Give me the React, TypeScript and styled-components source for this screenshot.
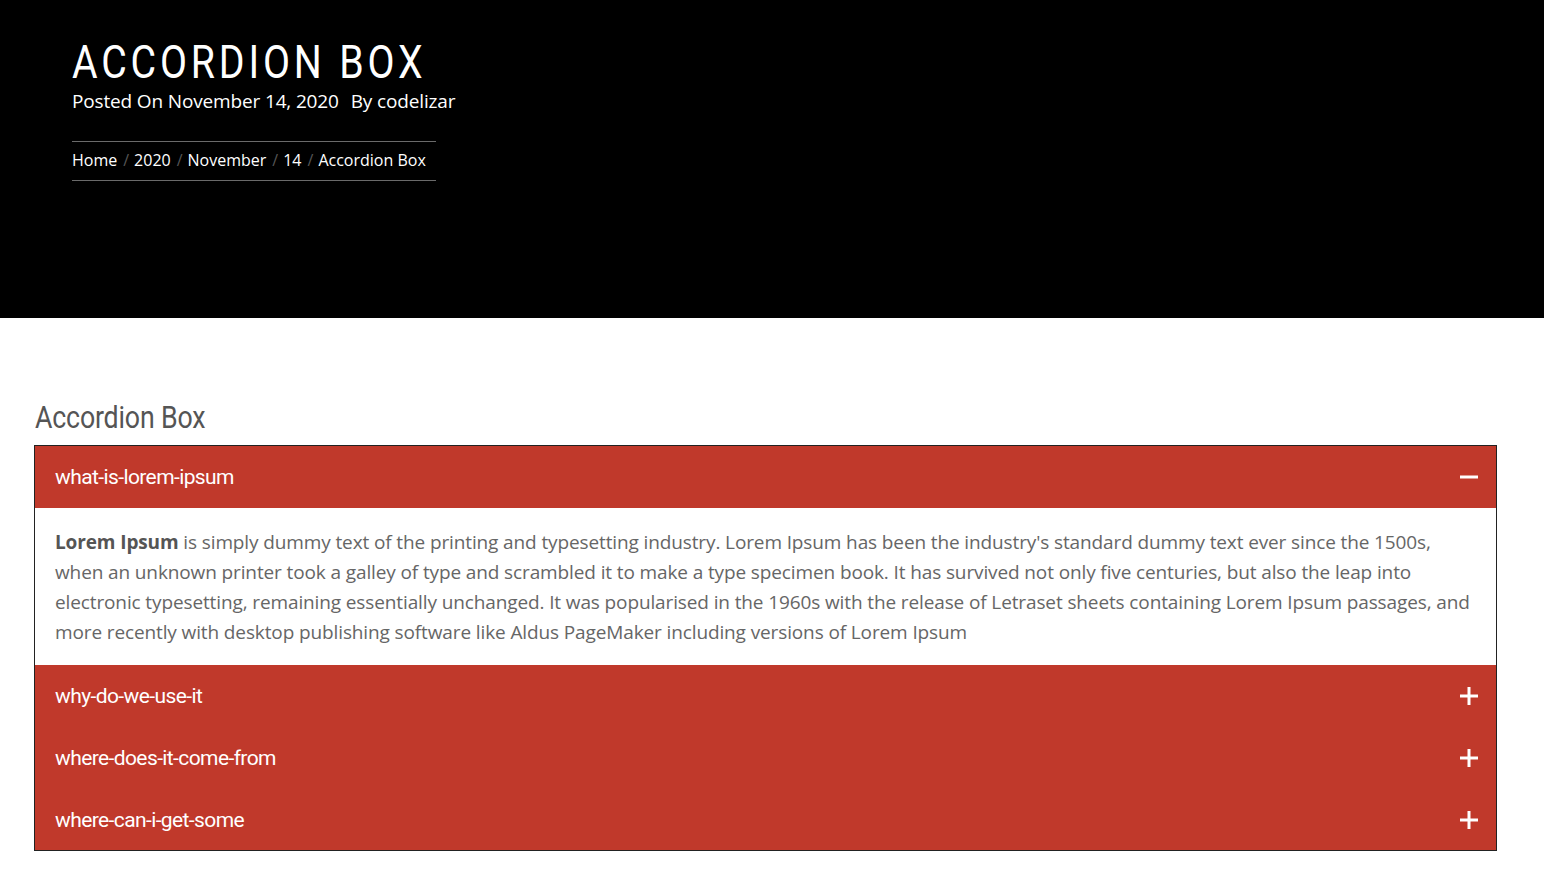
import React, { useState } from "react";
import styled, { createGlobalStyle } from "styled-components";

const Global = createGlobalStyle`
  html, body { margin: 0; padding: 0; background: #fff; }
  body { font-family: "Open Sans", "Liberation Sans", sans-serif; }
  * { box-sizing: border-box; }
`;

const Hero = styled.header`
  background: #000;
  height: 318px;
  padding: 38px 72px 0;
  color: #fff;
`;

const HeroTitle = styled.h1`
  margin: 0;
  font-family: Roboto, "Liberation Sans", sans-serif;
  font-weight: 400;
  font-size: 47px;
  line-height: 48px;
  letter-spacing: 4.6px;
  span {
    display: inline-block;
    transform: scaleX(0.835);
    transform-origin: left center;
    white-space: nowrap;
  }
`;

const Meta = styled.div`
  font-size: 19px;
  line-height: 26px;
  margin-top: 2px;
  display: flex;
  gap: 12px;
  letter-spacing: -0.15px;
`;

const Crumbs = styled.nav`
  margin-top: 27px;
  width: 364px;
  border-top: 1px solid #6a6a6a;
  border-bottom: 1px solid #6a6a6a;
  height: 40px;
  display: flex;
  align-items: center;
  font-size: 16px;
  padding-bottom: 2px;
`;

const Sep = styled.span`
  color: #555;
  margin: 0 5px 0 6px;
`;

const Main = styled.main`
  padding: 81px 47px 40px 34px;
`;

const SectionTitle = styled.h2`
  margin: 0 0 10px 1px;
  font-family: Roboto, "Liberation Sans", sans-serif;
  font-weight: 400;
  font-size: 32px;
  line-height: 36px;
  letter-spacing: -0.2px;
  color: #555;
  span {
    display: inline-block;
    transform: scaleX(0.835);
    transform-origin: left center;
  }
`;

const Box = styled.div`
  border: 1px solid #222;
`;

const Head = styled.button<{ $h: number }>`
  display: flex;
  width: 100%;
  align-items: center;
  justify-content: space-between;
  height: ${(p) => p.$h}px;
  padding: 0 18px 0 20px;
  border: 0;
  background: #c0392b;
  color: #fff;
  font-family: Roboto, "Liberation Sans", sans-serif;
  font-size: 21px;
  letter-spacing: -0.6px;
  cursor: pointer;
  text-align: left;
`;

const Body = styled.div`
  padding: 19px 20px 18px 20px;
  font-size: 19px;
  line-height: 30px;
  color: #666;
  letter-spacing: -0.12px;
  strong { color: #555; font-weight: 700; }
`;

const Icon = ({ open }: { open: boolean }) => (
  <svg width="18" height="18" viewBox="0 0 18 18">
    <rect x="0" y="7.5" width="18" height="3" fill="#fff" />
    {!open && <rect x="7.5" y="0" width="3" height="18" fill="#fff" />}
  </svg>
);

const items = [
  "what-is-lorem-ipsum",
  "why-do-we-use-it",
  "where-does-it-come-from",
  "where-can-i-get-some",
];

export default function App() {
  const [open, setOpen] = useState(0);
  return (
    <>
      <Global />
      <Hero>
        <HeroTitle><span>ACCORDION BOX</span></HeroTitle>
        <Meta>
          <span>Posted On November 14, 2020</span>
          <span>By codelizar</span>
        </Meta>
        <Crumbs>
          <span>Home</span><Sep>/</Sep>
          <span>2020</span><Sep>/</Sep>
          <span>November</span><Sep>/</Sep>
          <span>14</span><Sep>/</Sep>
          <span>Accordion Box</span>
        </Crumbs>
      </Hero>
      <Main>
        <SectionTitle><span>Accordion Box</span></SectionTitle>
        <Box>
          {items.map((t, i) => (
            <div key={t}>
              <Head $h={i === 3 ? 61 : 62} onClick={() => setOpen(open === i ? -1 : i)}>
                <span>{t}</span>
                <Icon open={open === i} />
              </Head>
              {open === i && (
                <Body>
                  <strong>Lorem Ipsum</strong> is simply dummy text of the printing and typesetting industry. Lorem Ipsum has been the industry's standard dummy text ever since the 1500s, when an unknown printer took a galley of type and scrambled it to make a type specimen book. It has survived not only five centuries, but also the leap into electronic typesetting, remaining essentially unchanged. It was popularised in the 1960s with the release of Letraset sheets containing Lorem Ipsum passages, and more recently with desktop publishing software like Aldus PageMaker including versions of Lorem Ipsum
                </Body>
              )}
            </div>
          ))}
        </Box>
      </Main>
    </>
  );
}
